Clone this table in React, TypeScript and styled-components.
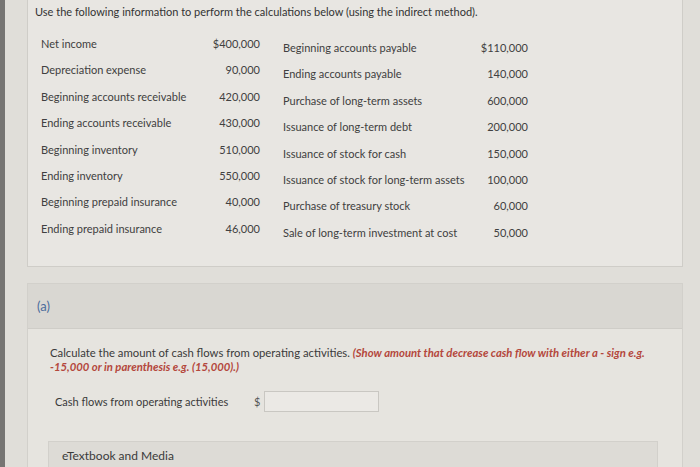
import styled, { createGlobalStyle } from "styled-components";

const GlobalStyle = createGlobalStyle`
  html, body {
    margin: 0;
    padding: 0;
    background: #e0ded9;
    overflow: hidden;
  }
  body {
    font-family: Lato, "Open Sans", sans-serif;
    color: #3a3a3a;
  }
`;

const leftRows: [string, string][] = [
  ["Net income", "$400,000"],
  ["Depreciation expense", "90,000"],
  ["Beginning accounts receivable", "420,000"],
  ["Ending accounts receivable", "430,000"],
  ["Beginning inventory", "510,000"],
  ["Ending inventory", "550,000"],
  ["Beginning prepaid insurance", "40,000"],
  ["Ending prepaid insurance", "46,000"],
];

const rightRows: [string, string][] = [
  ["Beginning accounts payable", "$110,000"],
  ["Ending accounts payable", "140,000"],
  ["Purchase of long-term assets", "600,000"],
  ["Issuance of long-term debt", "200,000"],
  ["Issuance of stock for cash", "150,000"],
  ["Issuance of stock for long-term assets", "100,000"],
  ["Purchase of treasury stock", "60,000"],
  ["Sale of long-term investment at cost", "50,000"],
];

export default function App() {
  return (
    <>
      <GlobalStyle />
      <Screen>
        <Edge />
        <Main>
          <InfoBox>
            <Title>
              Use the following information to perform the calculations below
              (using the indirect method).
            </Title>
            <Tables>
              <DataTable $label={150} $value={69}>
                {leftRows.map(([label, value]) => (
                  <Row key={label}>
                    <Label>{label}</Label>
                    <Value>{value}</Value>
                  </Row>
                ))}
              </DataTable>
              <DataTable $label={180} $value={65} $shift={4}>
                {rightRows.map(([label, value]) => (
                  <Row key={label}>
                    <Label>{label}</Label>
                    <Value>{value}</Value>
                  </Row>
                ))}
              </DataTable>
            </Tables>
          </InfoBox>

          <PartBox>
            <PartHeader>(a)</PartHeader>
            <PartBody>
              <Question>
                Calculate the amount of cash flows from operating activities.{" "}
                <Hint>
                  (Show amount that decrease cash flow with either a - sign e.g.
                  -15,000 or in parenthesis e.g. (15,000).)
                </Hint>
              </Question>
              <AnswerRow>
                <AnswerLabel>Cash flows from operating activities</AnswerLabel>
                <Dollar>$</Dollar>
                <AmountInput type="text" />
              </AnswerRow>
              <MediaBox>eTextbook and Media</MediaBox>
            </PartBody>
          </PartBox>
        </Main>
      </Screen>
    </>
  );
}

const Screen = styled.div`
  display: flex;
  align-items: flex-start;
  width: 700px;
  height: 467px;
  overflow: hidden;
`;

const Edge = styled.div`
  width: 5px;
  height: 467px;
  flex-shrink: 0;
  background: #767573;
`;

const Main = styled.div`
  width: 656px;
  flex-shrink: 0;
  margin-left: 22px;
  display: flex;
  flex-direction: column;
  gap: 16px;
`;

const InfoBox = styled.section`
  flex-shrink: 0;
  height: 268px;
  box-sizing: border-box;
  margin-top: -1px;
  padding-top: 5px;
  background: #e8e6e2;
  border: 1px solid #cfcdc8;
`;

const Title = styled.div`
  font-size: 11px;
  line-height: 14px;
  padding-left: 7px;
  color: #333;
`;

const Tables = styled.div`
  display: flex;
  gap: 23px;
  margin-top: 12px;
  padding-left: 13px;
`;

const DataTable = styled.div<{ $label: number; $value: number; $shift?: number }>`
  display: grid;
  grid-template-columns: ${(p) => p.$label}px ${(p) => p.$value}px;
  grid-auto-rows: 26.4px;
  padding-top: ${(p) => p.$shift ?? 0}px;
`;

const Row = styled.div`
  display: contents;
`;

const Label = styled.span`
  font-size: 11px;
  line-height: 26.4px;
  white-space: nowrap;
  color: #404040;
`;

const Value = styled.span`
  font-size: 11px;
  line-height: 26.4px;
  text-align: right;
  color: #404040;
`;

const PartBox = styled.section`
  flex-shrink: 0;
  height: 200px;
  display: flex;
  flex-direction: column;
  border: 1px solid #d2d0cb;
  border-bottom: none;
`;

const PartHeader = styled.div`
  height: 44px;
  flex-shrink: 0;
  display: flex;
  align-items: center;
  padding-left: 9px;
  font-size: 13px;
  color: #4d6c9c;
  background: #d9d7d2;
  border-bottom: 1px solid #cfcdc8;
`;

const PartBody = styled.div`
  flex: 1;
  background: #e6e4df;
  padding: 17px 30px 0 22px;
`;

const Question = styled.p`
  margin: 0;
  font-size: 11.3px;
  line-height: 14px;
  color: #3a3a3a;
`;

const Hint = styled.em`
  font-weight: 700;
  color: #b4473c;
`;

const AnswerRow = styled.div`
  display: flex;
  align-items: center;
  margin-top: 17px;
  padding-left: 5px;
`;

const AnswerLabel = styled.span`
  font-size: 11px;
  width: 199px;
  color: #3a3a3a;
`;

const Dollar = styled.span`
  font-size: 11px;
  width: 10px;
  color: #555;
`;

const AmountInput = styled.input`
  width: 115px;
  height: 21px;
  box-sizing: border-box;
  border: 1px solid #c9c7c2;
  background: #ebe9e5;
  outline: none;
`;

const MediaBox = styled.div`
  margin-top: 29px;
  margin-left: -2px;
  width: 610px;
  height: 40px;
  box-sizing: border-box;
  padding: 7px 13px;
  font-size: 12px;
  line-height: 14px;
  color: #3a3a3a;
  background: #dddbd6;
  border: 1px solid #d2d0cb;
`;
